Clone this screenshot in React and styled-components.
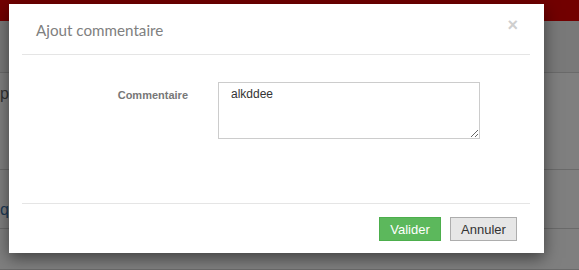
import styled, { createGlobalStyle } from 'styled-components'

const Global = createGlobalStyle`
    html, body {
        margin: 0;
        padding: 0;
        background: #fff;
    }
    body {
        font-family: "Liberation Sans", Arial, sans-serif;
        width: 579px;
        height: 270px;
        overflow: hidden;
    }
`

const Page = styled.div`
    position: relative;
    width: 579px;
    height: 270px;
    overflow: hidden;
`

const TopBar = styled.header`
    height: 21px;
    background: #e40000;
`

const Row = styled.div`
    display: flex;
    align-items: flex-start;
    box-sizing: border-box;
    height: ${ p => p.height }px;
    padding-top: ${ p => p.top || 0 }px;
    border-bottom: 1px solid #d4d4d4;
    background: ${ p => p.tint || `#fff` };
    font-size: 16px;
    line-height: 18px;
    color: ${ p => p.link ? `#3c74aa` : `#666` };
`

const Overlay = styled.div`
    position: absolute;
    inset: 0;
    background: rgba(0, 0, 0, 0.5);
    display: flex;
    align-items: flex-start;
    padding: 4px 0 0 9px;
`

const Modal = styled.div`
    width: 535px;
    height: 249px;
    background: #fff;
    box-shadow: 0 5px 15px rgba(0, 0, 0, 0.5);
    padding: 0 14px 0 13px;
    box-sizing: border-box;
    display: flex;
    flex-direction: column;
`

const Header = styled.div`
    height: 50px;
    display: flex;
    align-items: center;
    justify-content: space-between;
    padding: 0 12px 0 14px;
    border-bottom: 1px solid #e5e5e5;
`

const Title = styled.h4`
    margin: 0;
    font-family: Lato, sans-serif;
    font-weight: 400;
    font-size: 15.2px;
    color: #808080;
    padding-top: 2px;
`

const Close = styled.button`
    border: 0;
    background: none;
    padding: 0;
    margin-bottom: 8px;
    font-family: "Liberation Sans", Arial, sans-serif;
    font-size: 18px;
    font-weight: 700;
    line-height: 1;
    color: #cfcfcf;
    cursor: pointer;
`

const Body = styled.div`
    flex: 1;
    padding-top: 27px;
    border-bottom: 1px solid #e5e5e5;
`

const Field = styled.div`
    display: grid;
    grid-template-columns: 168px 262px;
    column-gap: 28px;
    align-items: start;
`

const Label = styled.label`
    text-align: right;
    font-size: 11px;
    font-weight: 700;
    color: #777;
    padding: 7px 2px 0 0;
`

const TextArea = styled.textarea`
    box-sizing: border-box;
    width: 262px;
    height: 57px;
    border: 1px solid #ccc;
    border-radius: 0;
    padding: 3px 12px;
    margin: 0;
    font-family: "Liberation Sans", Arial, sans-serif;
    font-size: 12px;
    line-height: 16px;
    color: #333;
    resize: vertical;
    outline: none;
`

const Footer = styled.div`
    height: 49px;
    display: flex;
    align-items: flex-start;
    justify-content: flex-end;
    gap: 9px;
    padding: 13px 13px 0 0;
    box-sizing: border-box;
`

const Button = styled.button`
    box-sizing: border-box;
    height: 24px;
    width: ${ p => p.width }px;
    padding: 0;
    border: 1px solid ${ p => p.primary ? `#4cae4c` : `#adadad` };
    background: ${ p => p.primary ? `#5cb85c` : `#e6e6e6` };
    color: ${ p => p.primary ? `#fff` : `#333` };
    font-family: "Liberation Sans", Arial, sans-serif;
    font-size: 13px;
    border-radius: 0;
    cursor: pointer;
`

export default function App() {

    return <Page>
        <Global />
        <TopBar />
        <Row height={ 52 } tint="#f2f2f2" />
        <Row height={ 97 } top={ 12 }>pour</Row>
        <Row height={ 59 } top={ 31 } link>quotation</Row>
        <Row height={ 41 } />

        <Overlay>
            <Modal role="dialog" aria-label="Ajout commentaire">
                <Header>
                    <Title>Ajout commentaire</Title>
                    <Close aria-label="Fermer">×</Close>
                </Header>
                <Body>
                    <Field>
                        <Label htmlFor="commentaire">Commentaire</Label>
                        <TextArea id="commentaire" defaultValue="alkddee" />
                    </Field>
                </Body>
                <Footer>
                    <Button primary width={ 62 }>Valider</Button>
                    <Button width={ 67 }>Annuler</Button>
                </Footer>
            </Modal>
        </Overlay>
    </Page>

}
